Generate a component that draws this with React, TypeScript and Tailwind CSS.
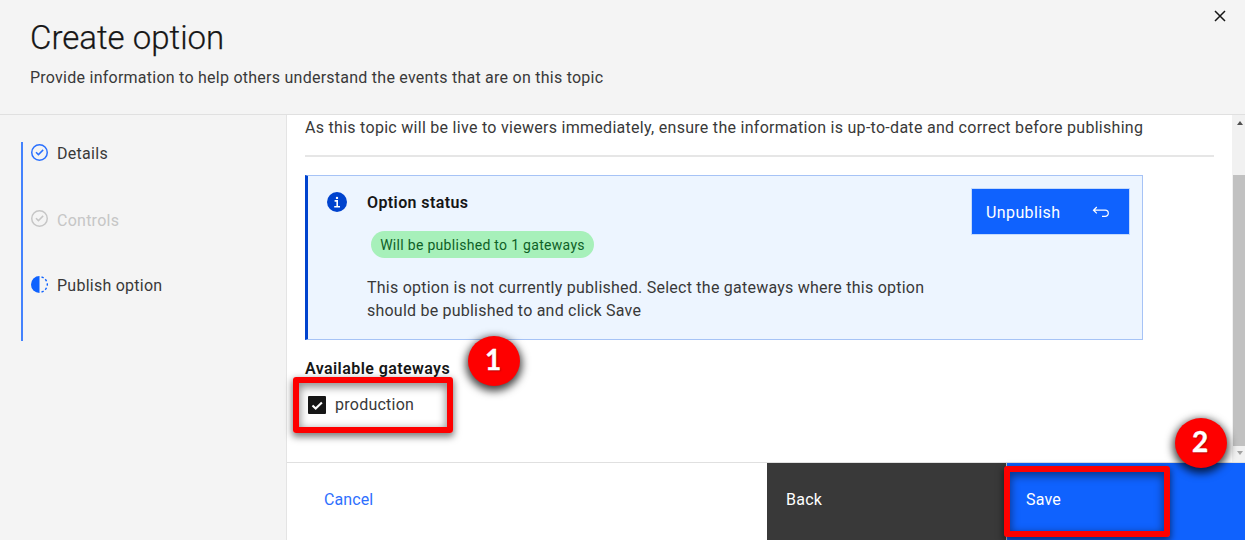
import React from 'react';

function CheckOutline() {
  return (
    <svg viewBox="0 0 32 32" className="h-[17px] w-[17px] shrink-0" fill="currentColor">
      <path d="M14 22 8.4 16.4 10.4 14.5 14 18 22 10.1 23.9 12z" />
      <path d="M16 0a16 16 0 1 0 16 16A16 16 0 0 0 16 0m0 29.2A13.2 13.2 0 1 1 29.2 16 13.2 13.2 0 0 1 16 29.2" />
    </svg>
  );
}

function Incomplete() {
  return (
    <svg viewBox="0 0 32 32" className="mt-px h-[17px] w-[17px] shrink-0" fill="currentColor">
      <path d="M16 0a16 16 0 0 0 0 32z" />
      <path
        d="M19.8 1.9A14.6 14.6 0 0 1 23.8 3.6M26.8 6.2A14.6 14.6 0 0 1 29.2 9.8M30.6 14A14.6 14.6 0 0 1 30.6 18M29.2 22.2A14.6 14.6 0 0 1 26.8 25.8M23.8 28.4A14.6 14.6 0 0 1 19.8 30.1"
        fill="none"
        stroke="currentColor"
        strokeWidth="2.8"
      />
    </svg>
  );
}

function Badge({ label, className }: { label: string; className: string }) {
  return (
    <div
      className={`absolute z-20 flex h-[50px] w-[52px] items-start justify-center rounded-[50%] bg-[#fe0000] pr-[2px] font-['Lato',sans-serif] text-[28px] leading-[46px] font-bold text-white shadow-[0_3px_8px_2px_rgba(0,0,0,0.75)] ${className}`}
    >
      <span className="[-webkit-text-stroke:0.4px_white] [text-shadow:1px_1px_2px_rgba(0,0,0,0.35)]">{label}</span>
    </div>
  );
}

const marker =
  'pointer-events-none absolute z-10 rounded-[3px] border-[6px] border-[#fe0000] shadow-[0_3px_7px_1px_rgba(0,0,0,0.5),inset_0_3px_8px_1px_rgba(0,0,0,0.45)]';

export default function App() {
  return (
    <div className="relative flex h-[540px] w-[1245px] flex-col overflow-hidden bg-[#f4f4f4] font-['Roboto','Liberation_Sans',sans-serif] text-[16px] leading-[22px] text-[#393939]">
      <header className="flex h-[115px] shrink-0 justify-between border-b border-[#e0e0e0] pl-[30px]">
        <div className="whitespace-nowrap">
          <h1 className="mt-[18px] text-[33px] leading-[40px] font-light text-[#161616] [-webkit-text-stroke:0.25px_#161616]">Create option</h1>
          <p className="mt-[9px] tracking-[0.25px]">Provide information to help others understand the events that are on this topic</p>
        </div>
        <svg viewBox="0 0 12 12" className="mt-[10px] mr-[19px] h-3 w-3" stroke="#161616" strokeWidth="1.5" fill="none">
          <path d="M1 1 11 11M11 1 1 11" />
        </svg>
      </header>

      <div className="flex min-h-0 flex-1">
        <aside className="w-[287px] shrink-0 border-r border-[#e4e4e4] pt-[27px] pl-[21px]">
          <ol className="h-[199px] border-l-2 border-[#4382fd] pl-[8px]">
            <li className="flex h-[66px] gap-[9px] pt-[2px]">
              <span className="text-[#2a70fe]"><CheckOutline /></span>
              <span className="-mt-px tracking-[0.3px]">Details</span>
            </li>
            <li className="flex h-[66px] gap-[9px] pt-[2px] text-[#c6c6c6]">
              <CheckOutline />
              <span className="tracking-[0.25px]">Controls</span>
            </li>
            <li className="flex h-[66px] gap-[9px] pt-[1px]">
              <span className="text-[#0f62fe]"><Incomplete /></span>
              <span className="tracking-[0.25px]">Publish option</span>
            </li>
          </ol>
        </aside>

        <div className="flex min-w-0 flex-1 flex-col">
          <div className="flex h-[347px] shrink-0 bg-white">
            <main className="min-w-0 flex-1 pr-[18px] pl-[18px]">
              <p className="pt-[2px] whitespace-nowrap tracking-[0.285px]">
                As this topic will be live to viewers immediately, ensure the information is up-to-date and correct before publishing
              </p>
              <div className="mt-[16px] h-[2px] bg-[#e6e6e6]" />
              <section className="mt-[18px] flex h-[165px] w-[838px] border border-[#a6c3f6] border-l-[#0043ce] border-l-[3px] bg-[#edf5ff]">
                <svg viewBox="0 0 20 20" className="mt-[16px] ml-[19px] h-5 w-5 shrink-0">
                  <circle cx="10" cy="10" r="10" fill="#0043ce" />
                  <circle cx="10" cy="5.9" r="1.2" fill="white" />
                  <path d="M7.6 8.9H10.2V14.6M7.2 14.7H13" fill="none" stroke="white" strokeWidth="1.6" />
                </svg>
                <div className="ml-[20px] w-[605px] whitespace-nowrap">
                  <h2 className="mt-[16px] font-semibold tracking-[0.4px] text-[#161616]">Option status</h2>
                  <div className="mt-[17px] ml-[4px] flex h-[27px] w-[223px] items-center justify-center rounded-full bg-[#a7f0ba] text-[14px] tracking-[0.3px] text-[#0e6027]">
                    Will be published to 1 gateways
                  </div>
                  <p className="mt-[18px] leading-[23px]">
                    <span className="block tracking-[0.24px]">This option is not currently published. Select the gateways where this option</span>
                    <span className="block tracking-[0.22px]">should be published to and click Save</span>
                  </p>
                </div>
                <button className="mt-[13px] flex h-[45px] w-[157px] items-center justify-between bg-[#0f62fe] pr-[19px] pl-[14px] text-white shadow-[0_0_0_1px_#c4dafc]">
                  <span className="pt-[2px] tracking-[0.4px]">Unpublish</span>
                  <svg viewBox="0 0 18 12" className="h-3 w-[18px]" fill="none" stroke="white" strokeWidth="1.2">
                    <path d="M4.8 1 1.5 4.2 4.8 7.4M1.5 4.2H13.2A3.1 3.1 0 0 1 13.2 10.4H10" />
                  </svg>
                </button>
              </section>
              <h3 className="mt-[18px] font-semibold tracking-[0.42px] text-[#161616]">Available gateways</h3>
              <label className="mt-[14px] ml-[3px] flex items-center gap-[9px]">
                <svg viewBox="0 0 18 18" className="-mt-px h-[18px] w-[18px]">
                  <rect width="18" height="18" rx="1" fill="#161616" />
                  <path d="m4.5 9.4 3.2 3.2 6.2-6.2" fill="none" stroke="white" strokeWidth="2.1" />
                </svg>
                <span className="tracking-[0.25px]">production</span>
              </label>
            </main>
            <div className="flex w-[13px] flex-col items-center bg-[#f1f1f1]">
              <svg viewBox="0 0 6 4" className="mt-[6px] ml-[2px] h-1 w-[6px] shrink-0"><path d="M3 0 6 4H0z" fill="#505050" /></svg>
              <div className="mt-[50px] ml-px h-[271px] w-[12px] shrink-0 bg-[#c1c1c1]" />
              <svg viewBox="0 0 6 4" className="mt-[5px] ml-[2px] h-1 w-[6px] shrink-0"><path d="M0 0H6L3 4z" fill="#a3a3a3" /></svg>
            </div>
          </div>

          <footer className="flex flex-1 border-t border-[#e0e0e0] text-white">
            <button className="flex w-[480px] items-start bg-white pt-[26px] pl-[37px] text-[#2e6ffe]"><span className="tracking-[0.1px]">Cancel</span></button>
            <button className="flex w-[239px] items-start bg-[#393939] pt-[26px] pl-[19px]"><span className="tracking-[0.25px]">Back</span></button>
            <button className="flex flex-1 items-start border-l border-[#c6c6c6] bg-[#0f62fe] pt-[26px] pl-[19px]"><span className="tracking-[0.2px]">Save</span></button>
          </footer>
        </div>
      </div>

      <div className={`${marker} top-[377px] left-[293px] h-[56px] w-[160px]`} />
      <div className={`${marker} top-[466px] left-[1004px] h-[71px] w-[166px]`} />
      <Badge label="1" className="top-[336px] left-[468px]" />
      <Badge label="2" className="top-[418px] left-[1175px]" />
    </div>
  );
}
